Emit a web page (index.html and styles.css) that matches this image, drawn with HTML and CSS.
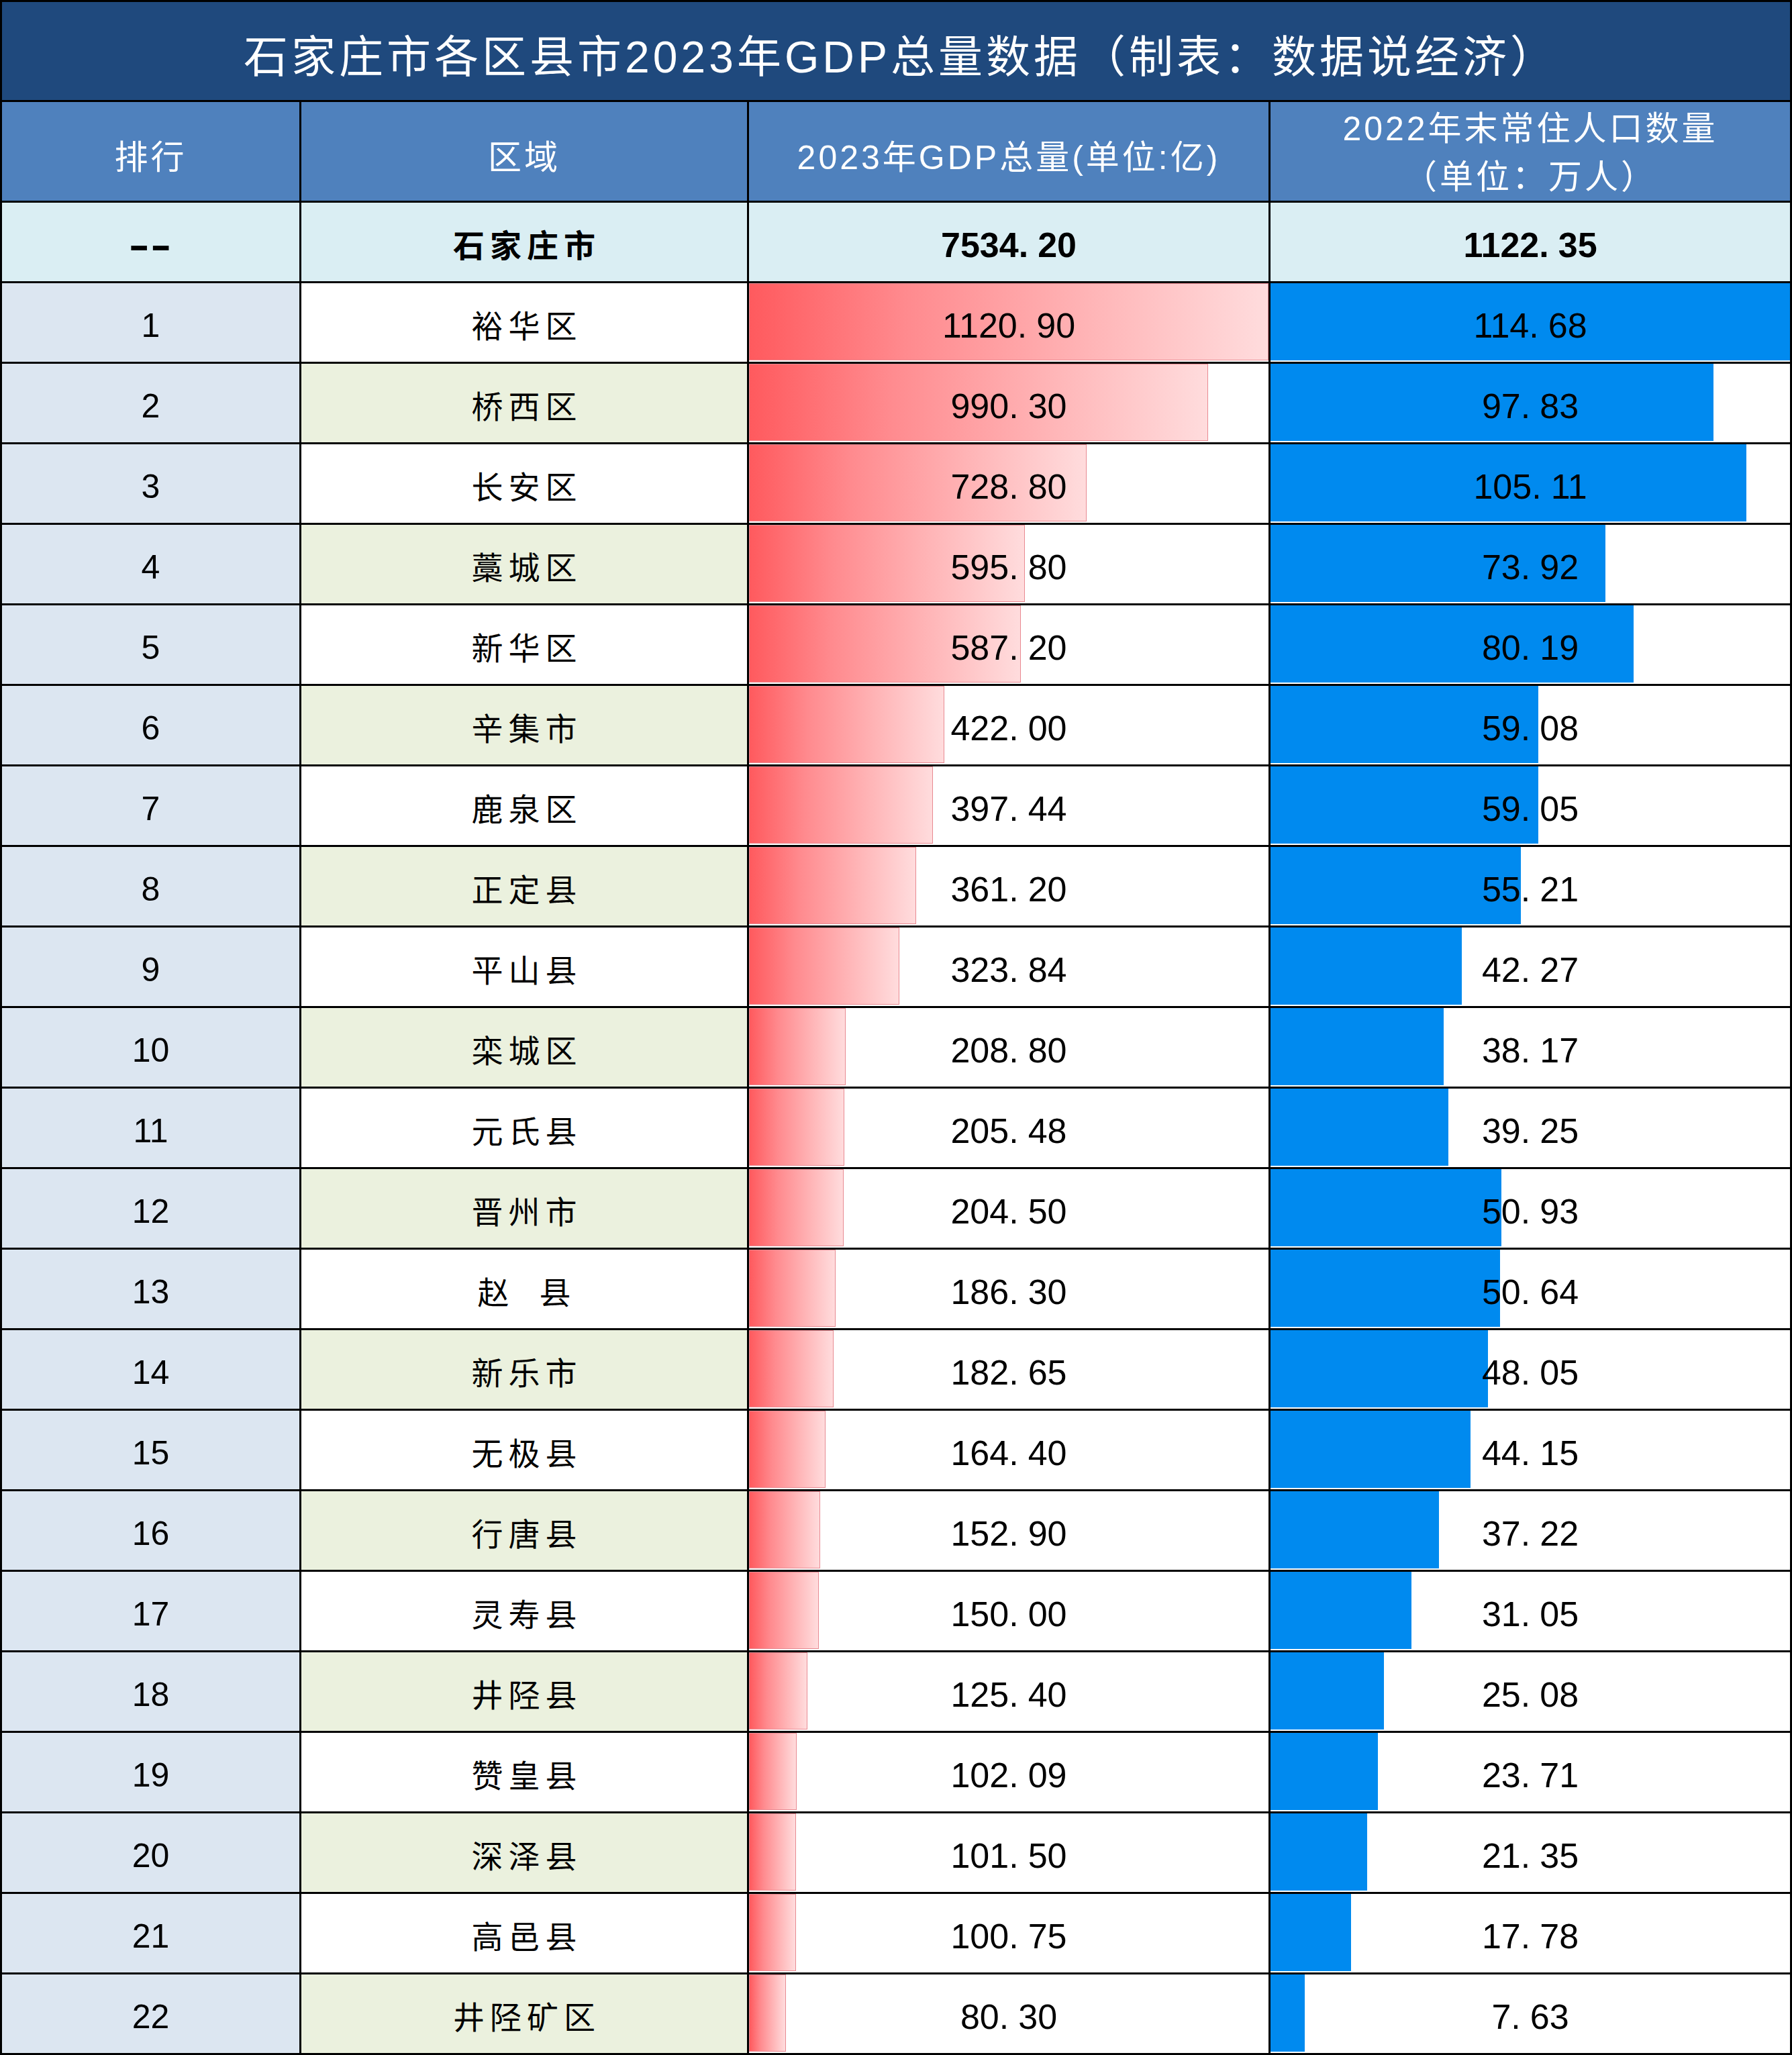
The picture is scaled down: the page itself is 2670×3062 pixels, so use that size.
FILE: index.html
```html
<!DOCTYPE html>
<html lang="zh-CN">
<head>
<meta charset="utf-8">
<title>石家庄市各区县市2023年GDP总量数据</title>
<link rel="stylesheet" href="styles.css">
</head>
<body>
<div class="sheet">
  <div class="cell title">石家庄市各区县市2023年GDP总量数据（制表：数据说经济）</div>

  <div class="cell hd">排行</div>
  <div class="cell hd">区域</div>
  <div class="cell hd">2023年GDP总量(单位:亿)</div>
  <div class="cell hd two"><span>2022年末常住人口数量</span><span>（单位：万人）</span></div>

  <div class="cell tot num"><span class="dash">--</span></div>
  <div class="cell tot name">石家庄市</div>
  <div class="cell tot num">7534<span class="pt">.</span>20</div>
  <div class="cell tot num">1122<span class="pt">.</span>35</div>

  <div class="cell rank num">1</div>
  <div class="cell region name">裕华区</div>
  <div class="cell gdp"><i class="bar red" style="width:100%"></i><span class="val num">1120<span class="pt">.</span>90</span></div>
  <div class="cell pop"><i class="bar blue" style="width:100%"></i><span class="val num">114<span class="pt">.</span>68</span></div>

  <div class="cell rank num">2</div>
  <div class="cell region alt name">桥西区</div>
  <div class="cell gdp"><i class="bar red" style="width:88.35%"></i><span class="val num">990<span class="pt">.</span>30</span></div>
  <div class="cell pop"><i class="bar blue" style="width:85.31%"></i><span class="val num">97<span class="pt">.</span>83</span></div>

  <div class="cell rank num">3</div>
  <div class="cell region name">长安区</div>
  <div class="cell gdp"><i class="bar red" style="width:65.02%"></i><span class="val num">728<span class="pt">.</span>80</span></div>
  <div class="cell pop"><i class="bar blue" style="width:91.66%"></i><span class="val num">105<span class="pt">.</span>11</span></div>

  <div class="cell rank num">4</div>
  <div class="cell region alt name">藁城区</div>
  <div class="cell gdp"><i class="bar red" style="width:53.15%"></i><span class="val num">595<span class="pt">.</span>80</span></div>
  <div class="cell pop"><i class="bar blue" style="width:64.46%"></i><span class="val num">73<span class="pt">.</span>92</span></div>

  <div class="cell rank num">5</div>
  <div class="cell region name">新华区</div>
  <div class="cell gdp"><i class="bar red" style="width:52.39%"></i><span class="val num">587<span class="pt">.</span>20</span></div>
  <div class="cell pop"><i class="bar blue" style="width:69.93%"></i><span class="val num">80<span class="pt">.</span>19</span></div>

  <div class="cell rank num">6</div>
  <div class="cell region alt name">辛集市</div>
  <div class="cell gdp"><i class="bar red" style="width:37.65%"></i><span class="val num">422<span class="pt">.</span>00</span></div>
  <div class="cell pop"><i class="bar blue" style="width:51.52%"></i><span class="val num">59<span class="pt">.</span>08</span></div>

  <div class="cell rank num">7</div>
  <div class="cell region name">鹿泉区</div>
  <div class="cell gdp"><i class="bar red" style="width:35.46%"></i><span class="val num">397<span class="pt">.</span>44</span></div>
  <div class="cell pop"><i class="bar blue" style="width:51.49%"></i><span class="val num">59<span class="pt">.</span>05</span></div>

  <div class="cell rank num">8</div>
  <div class="cell region alt name">正定县</div>
  <div class="cell gdp"><i class="bar red" style="width:32.22%"></i><span class="val num">361<span class="pt">.</span>20</span></div>
  <div class="cell pop"><i class="bar blue" style="width:48.14%"></i><span class="val num">55<span class="pt">.</span>21</span></div>

  <div class="cell rank num">9</div>
  <div class="cell region name">平山县</div>
  <div class="cell gdp"><i class="bar red" style="width:28.89%"></i><span class="val num">323<span class="pt">.</span>84</span></div>
  <div class="cell pop"><i class="bar blue" style="width:36.86%"></i><span class="val num">42<span class="pt">.</span>27</span></div>

  <div class="cell rank num">10</div>
  <div class="cell region alt name">栾城区</div>
  <div class="cell gdp"><i class="bar red" style="width:18.63%"></i><span class="val num">208<span class="pt">.</span>80</span></div>
  <div class="cell pop"><i class="bar blue" style="width:33.28%"></i><span class="val num">38<span class="pt">.</span>17</span></div>

  <div class="cell rank num">11</div>
  <div class="cell region name">元氏县</div>
  <div class="cell gdp"><i class="bar red" style="width:18.33%"></i><span class="val num">205<span class="pt">.</span>48</span></div>
  <div class="cell pop"><i class="bar blue" style="width:34.23%"></i><span class="val num">39<span class="pt">.</span>25</span></div>

  <div class="cell rank num">12</div>
  <div class="cell region alt name">晋州市</div>
  <div class="cell gdp"><i class="bar red" style="width:18.24%"></i><span class="val num">204<span class="pt">.</span>50</span></div>
  <div class="cell pop"><i class="bar blue" style="width:44.41%"></i><span class="val num">50<span class="pt">.</span>93</span></div>

  <div class="cell rank num">13</div>
  <div class="cell region name pre">赵  县</div>
  <div class="cell gdp"><i class="bar red" style="width:16.62%"></i><span class="val num">186<span class="pt">.</span>30</span></div>
  <div class="cell pop"><i class="bar blue" style="width:44.16%"></i><span class="val num">50<span class="pt">.</span>64</span></div>

  <div class="cell rank num">14</div>
  <div class="cell region alt name">新乐市</div>
  <div class="cell gdp"><i class="bar red" style="width:16.30%"></i><span class="val num">182<span class="pt">.</span>65</span></div>
  <div class="cell pop"><i class="bar blue" style="width:41.90%"></i><span class="val num">48<span class="pt">.</span>05</span></div>

  <div class="cell rank num">15</div>
  <div class="cell region name">无极县</div>
  <div class="cell gdp"><i class="bar red" style="width:14.67%"></i><span class="val num">164<span class="pt">.</span>40</span></div>
  <div class="cell pop"><i class="bar blue" style="width:38.50%"></i><span class="val num">44<span class="pt">.</span>15</span></div>

  <div class="cell rank num">16</div>
  <div class="cell region alt name">行唐县</div>
  <div class="cell gdp"><i class="bar red" style="width:13.64%"></i><span class="val num">152<span class="pt">.</span>90</span></div>
  <div class="cell pop"><i class="bar blue" style="width:32.46%"></i><span class="val num">37<span class="pt">.</span>22</span></div>

  <div class="cell rank num">17</div>
  <div class="cell region name">灵寿县</div>
  <div class="cell gdp"><i class="bar red" style="width:13.38%"></i><span class="val num">150<span class="pt">.</span>00</span></div>
  <div class="cell pop"><i class="bar blue" style="width:27.08%"></i><span class="val num">31<span class="pt">.</span>05</span></div>

  <div class="cell rank num">18</div>
  <div class="cell region alt name">井陉县</div>
  <div class="cell gdp"><i class="bar red" style="width:11.19%"></i><span class="val num">125<span class="pt">.</span>40</span></div>
  <div class="cell pop"><i class="bar blue" style="width:21.87%"></i><span class="val num">25<span class="pt">.</span>08</span></div>

  <div class="cell rank num">19</div>
  <div class="cell region name">赞皇县</div>
  <div class="cell gdp"><i class="bar red" style="width:9.11%"></i><span class="val num">102<span class="pt">.</span>09</span></div>
  <div class="cell pop"><i class="bar blue" style="width:20.68%"></i><span class="val num">23<span class="pt">.</span>71</span></div>

  <div class="cell rank num">20</div>
  <div class="cell region alt name">深泽县</div>
  <div class="cell gdp"><i class="bar red" style="width:9.06%"></i><span class="val num">101<span class="pt">.</span>50</span></div>
  <div class="cell pop"><i class="bar blue" style="width:18.62%"></i><span class="val num">21<span class="pt">.</span>35</span></div>

  <div class="cell rank num">21</div>
  <div class="cell region name">高邑县</div>
  <div class="cell gdp"><i class="bar red" style="width:8.99%"></i><span class="val num">100<span class="pt">.</span>75</span></div>
  <div class="cell pop"><i class="bar blue" style="width:15.50%"></i><span class="val num">17<span class="pt">.</span>78</span></div>

  <div class="cell rank num">22</div>
  <div class="cell region alt name">井陉矿区</div>
  <div class="cell gdp"><i class="bar red" style="width:7.16%"></i><span class="val num">80<span class="pt">.</span>30</span></div>
  <div class="cell pop"><i class="bar blue" style="width:6.65%"></i><span class="val num">7<span class="pt">.</span>63</span></div>
</div>
</body>
</html>
```

FILE: styles.css
```css
html, body {
  margin: 0;
  padding: 0;
  background: #ffffff;
}

.sheet {
  width: 2670px;
  box-sizing: border-box;
  display: grid;
  grid-template-columns: 443px 664px 774px 774px;
  grid-template-rows: 146px 147px 117px repeat(22, 117px);
  gap: 3px;
  padding: 3px;
  background: #000000;
  font-family: "Liberation Sans", "Noto Sans CJK SC", sans-serif;
  color: #000000;
}

.cell {
  position: relative;
  display: flex;
  align-items: center;
  justify-content: center;
  text-align: center;
  box-sizing: border-box;
  padding-top: 8px;
  background: #ffffff;
  white-space: nowrap;
}

.title {
  grid-column: 1 / -1;
  background: #1f497d;
  color: #ffffff;
  font-size: 66px;
  letter-spacing: 5px;
  padding-top: 6px;
  padding-left: 14px;
}

.hd {
  background: #4f81bd;
  color: #ffffff;
  font-size: 50px;
  letter-spacing: 4px;
}

.hd.two {
  flex-direction: column;
  line-height: 72px;
  padding-top: 4px;
}

.num {
  font-family: "Liberation Sans", sans-serif;
  font-size: 52px;
}

.name {
  font-family: "Noto Sans CJK SC", sans-serif;
  font-size: 47px;
  letter-spacing: 8px;
  padding-left: 8px;
  padding-top: 4px;
}

.name.pre {
  white-space: pre;
}

.pt {
  margin-right: 0.27em;
}

.tot {
  background: #daeef3;
  font-weight: 700;
}

.dash {
  display: inline-block;
  font-size: 58px;
  letter-spacing: 1px;
  transform: scaleX(1.6);
}

.rank {
  background: #dce6f1;
  font-size: 50px;
}

.region {
  background: #ffffff;
}

.region.alt {
  background: #ebf1de;
}

.gdp, .pop {
  background: #ffffff;
  padding-top: 0;
}

.val {
  position: relative;
  padding-top: 8px;
}

.bar {
  position: absolute;
  left: 0;
  top: 0;
  bottom: 2px;
  box-sizing: border-box;
}

.bar.red {
  background: linear-gradient(to right, #ff5a5e 0%, #ff8a8e 30%, #ffb4b6 65%, #ffdcdd 100%);
  border: 1px solid #e88a92;
}

.bar.blue {
  background: #008aef;
}
```
